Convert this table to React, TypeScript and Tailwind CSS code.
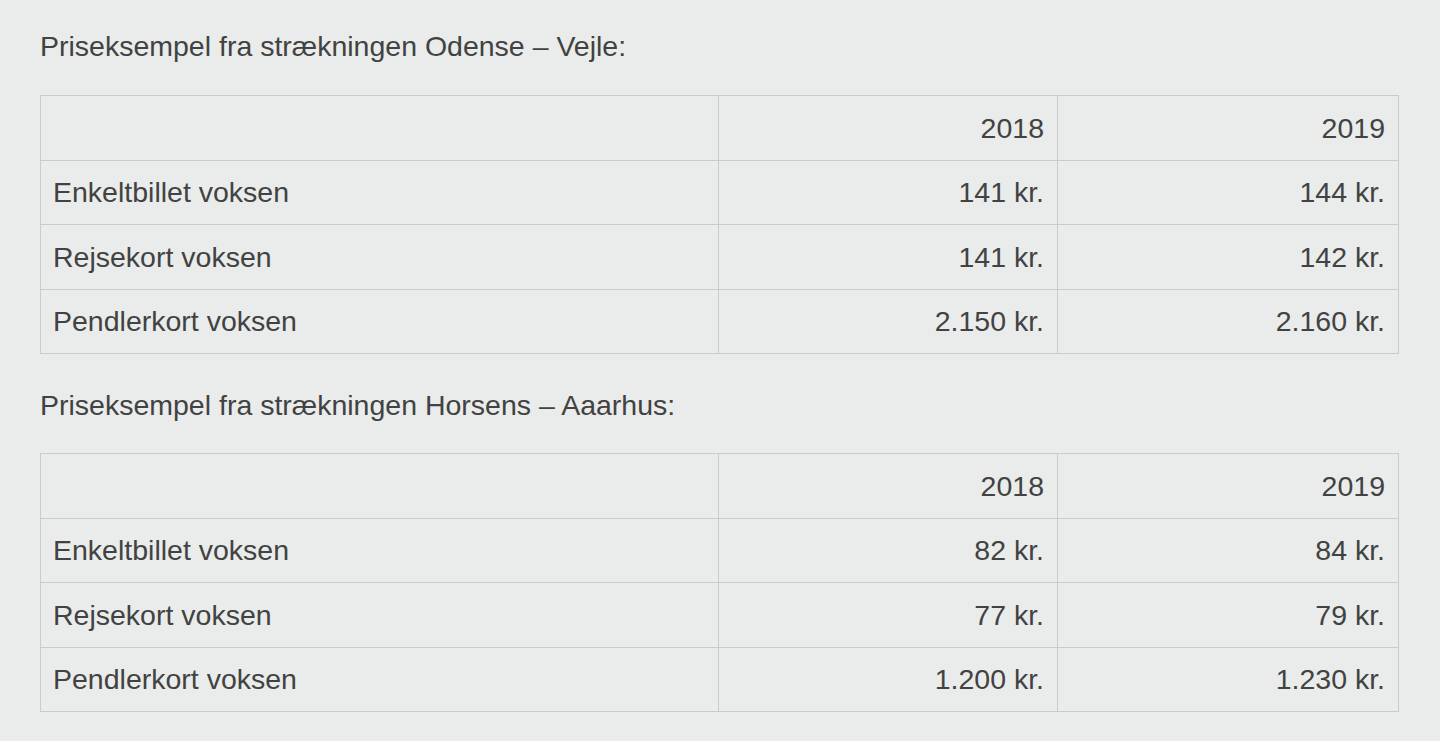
import React from 'react';

type Row = { label: string; a: string; b: string };

const ODENSE: Row[] = [
  { label: 'Enkeltbillet voksen', a: '141 kr.', b: '144 kr.' },
  { label: 'Rejsekort voksen', a: '141 kr.', b: '142 kr.' },
  { label: 'Pendlerkort voksen', a: '2.150 kr.', b: '2.160 kr.' },
];

const HORSENS: Row[] = [
  { label: 'Enkeltbillet voksen', a: '82 kr.', b: '84 kr.' },
  { label: 'Rejsekort voksen', a: '77 kr.', b: '79 kr.' },
  { label: 'Pendlerkort voksen', a: '1.200 kr.', b: '1.230 kr.' },
];

const PriceTable = ({ rows }: { rows: Row[] }) => (
  <table className="w-[1358px] border-collapse table-fixed">
    <colgroup>
      <col className="w-[678px]" />
      <col className="w-[339px]" />
      <col className="w-[341px]" />
    </colgroup>
    <tbody>
      <tr className="h-[64.5px]">
        <td className="border border-[#cacccb] px-[13px]"></td>
        <td className="border border-[#cacccb] px-[13px] text-right">2018</td>
        <td className="border border-[#cacccb] px-[13px] text-right">2019</td>
      </tr>
      {rows.map(r => (
        <tr key={r.label} className="h-[64.5px]">
          <td className="border border-[#cacccb] px-[12px]">{r.label}</td>
          <td className="border border-[#cacccb] px-[13px] text-right">{r.a}</td>
          <td className="border border-[#cacccb] px-[13px] text-right">{r.b}</td>
        </tr>
      ))}
    </tbody>
  </table>
);

export default function App() {
  return (
    <div className="min-h-[741px] bg-[#e9eceb] px-10 pt-[31px] pb-10 text-[28.5px] leading-[30px] text-[#424242] font-['Liberation_Sans',Arial,sans-serif]">
      <p className="mb-[34px]">Priseksempel fra strækningen Odense – Vejle:</p>
      <PriceTable rows={ODENSE} />
      <p className="mt-[36px] mb-[33px]">Priseksempel fra strækningen Horsens – Aaarhus:</p>
      <PriceTable rows={HORSENS} />
    </div>
  );
}
